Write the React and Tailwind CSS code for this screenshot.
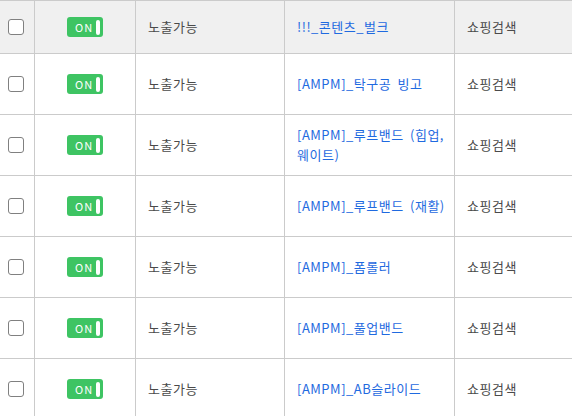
import React from "react";

const rows = [
  { name: "[AMPM]_탁구공 빙고" },
  { name: "[AMPM]_루프밴드 (힙업, 웨이트)" },
  { name: "[AMPM]_루프밴드 (재활)" },
  { name: "[AMPM]_폼롤러" },
  { name: "[AMPM]_풀업밴드" },
  { name: "[AMPM]_AB슬라이드" },
];

const Checkbox = () => (
  <span className="block w-4 h-4 rounded-[3px] border border-[#808080] bg-white" />
);

const Toggle = () => (
  <span className="flex items-center w-9 h-5 rounded-[3px] bg-[#3ec463] pl-[8px] pr-[3px]">
    <span className="flex-1 text-[11px] leading-none text-white tracking-[1px]">ON</span>
    <span className="block w-[4px] h-[15px] rounded-full bg-white" />
  </span>
);

const Row = ({ header, name }) => (
  <div
    className={`flex text-[13px] leading-5 tracking-[0.5px] [word-spacing:3px] text-[#4a4a4a] ${
      header ? "h-[54px] border-y bg-[#f0f0f0]" : "h-[61px] border-b bg-white"
    } border-[#cbcbcb]`}
  >
    <div className="w-[35px] shrink-0 border-r border-[#cbcbcb] flex items-center pl-2">
      <Checkbox />
    </div>
    <div className="w-[101px] shrink-0 border-r border-[#cbcbcb] flex items-center justify-center">
      <Toggle />
    </div>
    <div className="w-[149px] shrink-0 border-r border-[#cbcbcb] flex items-center px-3">
      노출가능
    </div>
    <div className="w-[170px] shrink-0 border-r border-[#cbcbcb] flex items-center pl-3 pr-2 text-[#1f6ae0]">
      {name}
    </div>
    <div className="flex-1 flex items-center px-3">쇼핑검색</div>
  </div>
);

export default function App() {
  return (
    <div
      className="w-[572px] h-[416px] overflow-hidden bg-white"
      style={{ fontFamily: '"Noto Sans CJK KR", "Noto Sans", sans-serif' }}
    >
      <Row header name="!!!_콘텐츠_벌크" />
      {rows.map((r) => (
        <Row key={r.name} name={r.name} />
      ))}
    </div>
  );
}
